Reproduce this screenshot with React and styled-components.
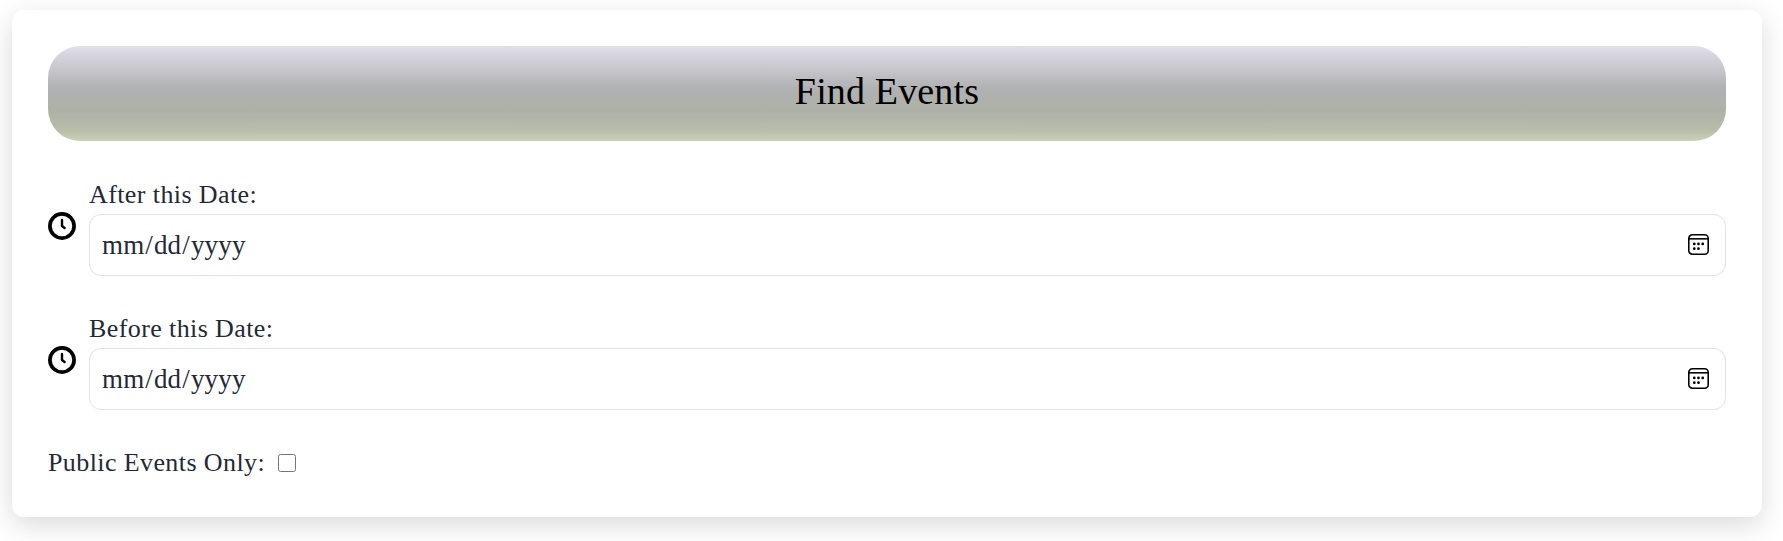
import React from 'react'
import styled, { createGlobalStyle } from 'styled-components';

const Global = createGlobalStyle`
    * {
        box-sizing:border-box;
    }
    body {
        margin:0;
        background-color:#ffffff;
        font-family:"Liberation Serif", serif;
        color:#1f2937;
    }
`;

const ClockIcon = () => (
    <IconBox viewBox="0 0 28 28" fill="none" stroke="#000000" strokeLinecap="round" strokeLinejoin="round">
        <circle cx="14" cy="14" r="12.1" strokeWidth="3.7" />
        <path d="M14 8v6l2.6 2" strokeWidth="2.4" />
    </IconBox>
);

const CalendarIcon = () => (
    <CalendarGlyph viewBox="0 0 20 20" fill="none" stroke="#000000" strokeWidth="1.5">
        <rect x="0.75" y="0.75" width="18.5" height="18.5" rx="3.4" />
        <path d="M0.75 4.6h18.5" />
        <g fill="#000000" stroke="none">
            <circle cx="6" cy="9.5" r="1.3" />
            <circle cx="10" cy="9.5" r="1.3" />
            <circle cx="14" cy="9.5" r="1.3" />
            <circle cx="6" cy="14" r="1.3" />
            <circle cx="10" cy="14" r="1.3" />
        </g>
    </CalendarGlyph>
);

const DateField = ({ label, id }) => (
    <DateRow>
        <ClockIcon />
        <FieldColumn>
            <FieldLabel htmlFor={id}>{label}</FieldLabel>
            <InputWrap>
                <DateInput id={id} type="date" />
                <CalendarIcon />
            </InputWrap>
        </FieldColumn>
    </DateRow>
);

const App = () => {
    return (
        <Page>
            <Global />
            <Card>
                <Header>Find Events</Header>
                <DateField id="after" label="After this Date:" />
                <DateField id="before" label="Before this Date:" />
                <CheckRow>
                    <CheckLabel htmlFor="public">Public Events Only:</CheckLabel>
                    <Checkbox id="public" type="checkbox" />
                </CheckRow>
            </Card>
        </Page>
    )
}

export default App;


const Page = styled.div`
    padding:10px 21px 24px 12px;
`;

const Card = styled.div`
    height:507px;
    padding:36px;
    background-color:#ffffff;
    border-radius:12px;
    box-shadow:0 8px 28px rgba(0,0,0,0.15);
`;

const Header = styled.h2`
    height:95px;
    margin:0 0 40px 0;
    padding-bottom:6px;
    display:flex;
    align-items:center;
    justify-content:center;
    font-size:38px;
    font-weight:normal;
    letter-spacing:0.15px;
    color:#000000;
    border-radius:32px;
    background:linear-gradient(to bottom, #e1dfeb 0%, #b0b1b2 45%, #aeb1a6 70%, #b9bfaa 90%, #cbd1b8 100%);
`;

const DateRow = styled.div`
    display:flex;
    align-items:center;
    gap:13px;
    margin-bottom:39px;
`;

const IconBox = styled.svg`
    width:28px;
    height:28px;
    margin-bottom:6px;
    flex-shrink:0;
`;

const FieldColumn = styled.div`
    flex:1;
    display:flex;
    flex-direction:column;
    gap:5px;
`;

const FieldLabel = styled.label`
    font-size:26px;
    line-height:28px;
    letter-spacing:0.4px;
    color:#1f2937;
`;

const InputWrap = styled.div`
    position:relative;
`;

const DateInput = styled.input`
    display:block;
    width:100%;
    height:62px;
    padding:0 11px;
    font-family:"Liberation Serif", serif;
    font-size:27px;
    letter-spacing:0.15px;
    color:#1f2937;
    background-color:#ffffff;
    border:1px solid #e2e2e6;
    border-radius:12px;
    outline:none;

    &::-webkit-calendar-picker-indicator {
        opacity:0;
    }
`;

const CalendarGlyph = styled.svg`
    position:absolute;
    top:20px;
    right:17px;
    width:21px;
    height:21px;
    pointer-events:none;
`;

const CheckRow = styled.div`
    display:flex;
    align-items:center;
    gap:13px;
`;

const CheckLabel = styled.label`
    font-size:26px;
    line-height:28px;
    letter-spacing:0.4px;
    color:#1f2937;
`;

const Checkbox = styled.input`
    width:18px;
    height:18px;
    margin:0;
`;
